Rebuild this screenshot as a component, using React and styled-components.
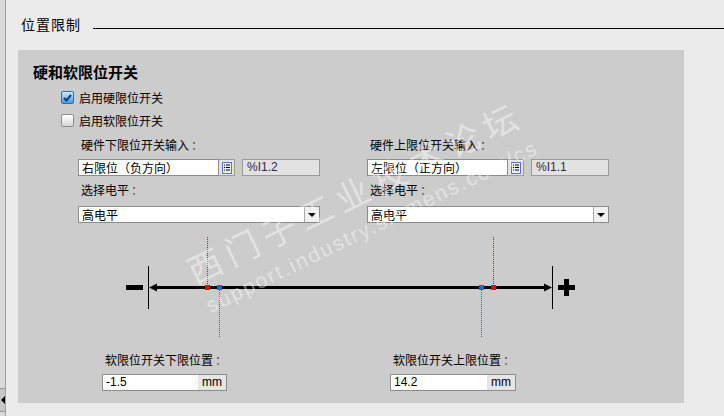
import React from "react";
import styled, { createGlobalStyle } from "styled-components";

const GlobalStyle = createGlobalStyle`
  html, body {
    margin: 0;
    padding: 0;
    background: #ebebeb;
  }
  body {
    font-family: "Liberation Sans", "Noto Sans CJK SC", sans-serif;
    font-size: 12px;
    color: #000;
  }
`;

const Root = styled.div`
  position: relative;
  display: flex;
  width: 724px;
  height: 416px;
  overflow: hidden;
  background: #ebebeb;
`;

const Strip = styled.div`
  width: 5px;
  flex: none;
  display: flex;
  flex-direction: column;
  justify-content: flex-end;
  background: #d9d9d9;
  border-right: 1px solid #a0a0a0;
  padding-bottom: 4px;
`;

const ScrollBtn = styled.div`
  height: 22px;
  background: #c6c6c6;
  border-top: 1px solid #9a9a9a;
  border-bottom: 1px solid #9a9a9a;
  display: flex;
  align-items: center;
  svg {
    display: block;
  }
`;

const Main = styled.div`
  flex: 1;
  padding-left: 12px;
`;

const Header = styled.div`
  display: flex;
  height: 16px;
  margin-top: 16px;
  margin-left: 3px;
`;

const Title = styled.div`
  font-family: "Noto Sans CJK SC", sans-serif;
  font-size: 14px;
  line-height: 16px;
  letter-spacing: 1px;
`;

const Rule = styled.div`
  flex: 1;
  align-self: flex-end;
  margin: 0 0 3px 12px;
  border-top: 1px solid #000;
`;

const Panel = styled.section`
  box-sizing: border-box;
  width: 666px;
  height: 353px;
  margin-top: 18px;
  padding: 12px 15px 0;
  background: #cccccc;
`;

const Heading = styled.h2`
  margin: 0;
  height: 20px;
  font-family: "Noto Sans CJK SC", sans-serif;
  font-size: 15px;
  font-weight: 700;
  line-height: 20px;
`;

const CheckRow = styled.label`
  display: flex;
  align-items: center;
  gap: 5px;
  height: ${(p) => p.$h}px;
  padding-left: 28px;
  margin-top: ${(p) => p.$mt || 0}px;
  font-family: "Noto Sans CJK SC", sans-serif;
`;

const Box = styled.span`
  box-sizing: border-box;
  width: 13px;
  height: 13px;
  border-radius: 2px;
  border: 1px solid ${(p) => (p.$on ? "#2f6fa7" : "#8e8e8e")};
  background: ${(p) =>
    p.$on
      ? "linear-gradient(#cfe8ff, #4a9be0)"
      : "linear-gradient(#ffffff, #d6d6d6)"};
  display: flex;
  align-items: center;
  justify-content: center;
`;

const Columns = styled.div`
  display: flex;
  gap: 47px;
  margin-left: 45px;
`;

const Column = styled.div`
  width: 242px;
`;

const Label = styled.div`
  height: 22px;
  line-height: 22px;
  padding-left: 3px;
  margin-top: ${(p) => p.$mt || 0}px;
  font-family: "Noto Sans CJK SC", sans-serif;
  white-space: nowrap;
`;

const Colon = styled.span`
  color: #5a4a30;
  margin-left: 2px;
`;

const FieldRow = styled.div`
  display: flex;
  height: 17px;
  margin-top: ${(p) => p.$mt || 0}px;
`;

const TextBox = styled.div`
  box-sizing: border-box;
  width: ${(p) => p.$w}px;
  height: 17px;
  border: 1px solid #8c8c8c;
  background: #fff;
  padding-left: 3px;
  line-height: 15px;
  font-family: "Noto Sans CJK SC", sans-serif;
  white-space: nowrap;
  overflow: hidden;
`;

const IconBtn = styled.div`
  box-sizing: border-box;
  width: 16px;
  height: 17px;
  border: 1px solid #9a9a9a;
  border-left: none;
  background: #e4e4e4;
  display: flex;
  align-items: center;
  justify-content: center;
`;

const Address = styled.div`
  box-sizing: border-box;
  width: 78px;
  height: 17px;
  margin-left: 7px;
  border: 1px solid #9a9a9a;
  background: #e2e2e2;
  padding-left: 4px;
  line-height: 15px;
  color: #2c2c44;
`;

const Select = styled.div`
  box-sizing: border-box;
  display: flex;
  width: 242px;
  height: 17px;
  margin-top: ${(p) => p.$mt || 0}px;
  border: 1px solid #8c8c8c;
  background: #fff;
`;

const SelectText = styled.div`
  flex: 1;
  padding-left: 3px;
  line-height: 15px;
  font-family: "Noto Sans CJK SC", sans-serif;
`;

const SelectArrow = styled.div`
  width: 14px;
  border-left: 1px solid #a8a8a8;
  background: #f0f0f0;
  display: flex;
  align-items: center;
  justify-content: center;
`;

const Diagram = styled.svg`
  display: block;
  margin: 7px 0 0 87px;
`;

const Limits = styled.div`
  display: flex;
  margin: 4px 0 0 69px;
`;

const Limit = styled.div`
  width: ${(p) => p.$w}px;
`;

const UnitBox = styled.div`
  box-sizing: border-box;
  display: flex;
  width: ${(p) => p.$w}px;
  height: 17px;
  margin-top: 3px;
  border: 1px solid #8c8c8c;
  background: #fff;
`;

const UnitValue = styled.div`
  flex: 1;
  padding-left: 3px;
  line-height: 15px;
`;

const Unit = styled.div`
  width: 28px;
  background: #e6e6e6;
  line-height: 15px;
  text-align: center;
`;

const Watermark = styled.div`
  position: absolute;
  left: 152px;
  top: 172px;
  width: 420px;
  transform: rotate(-26deg);
  pointer-events: none;
  color: rgba(255, 255, 255, 0.45);
  text-align: center;
`;

const MarkBig = styled.div`
  font-family: "Noto Sans CJK SC", sans-serif;
  font-size: 34px;
  line-height: 36px;
  letter-spacing: 7px;
  white-space: nowrap;
`;

const MarkSmall = styled.div`
  margin-top: 10px;
  font-family: "Liberation Sans", sans-serif;
  font-size: 21px;
  line-height: 22px;
  letter-spacing: 2px;
  white-space: nowrap;
`;

const Check = () => (
  <svg width="9" height="8" viewBox="0 0 9 8">
    <path d="M1 4 L3.5 6.5 L8 1" fill="none" stroke="#0d3d78" strokeWidth="2" />
  </svg>
);

const ListIcon = () => (
  <svg width="10" height="12" viewBox="0 0 10 12">
    <rect x="0.5" y="0.5" width="9" height="11" fill="#eef1ff" stroke="#5a6fd6" />
    <rect x="2" y="2.5" width="1" height="1" fill="#000" />
    <rect x="4" y="2.5" width="4" height="1" fill="#000" />
    <rect x="2" y="5" width="1" height="1" fill="#000" />
    <rect x="4" y="5" width="4" height="1" fill="#000" />
    <rect x="2" y="7.5" width="1" height="1" fill="#000" />
    <rect x="4" y="7.5" width="4" height="1" fill="#000" />
  </svg>
);

const DownArrow = () => (
  <svg width="8" height="4" viewBox="0 0 8 4">
    <path d="M0 0 H8 L4 4 Z" fill="#000" />
  </svg>
);

function Switch({ title, value, address }) {
  return (
    <Column>
      <Label $mt={3}>
        {title}
        <Colon>：</Colon>
      </Label>
      <FieldRow $mt={3}>
        <TextBox $w={141}>{value}</TextBox>
        <IconBtn>
          <ListIcon />
        </IconBtn>
        <Address>{address}</Address>
      </FieldRow>
      <Label $mt={3}>
        选择电平<Colon>：</Colon>
      </Label>
      <Select $mt={5}>
        <SelectText>高电平</SelectText>
        <SelectArrow>
          <DownArrow />
        </SelectArrow>
      </Select>
    </Column>
  );
}

function Travel() {
  const red = "#ff0000";
  const blue = "#0a70c0";
  return (
    <Diagram width="470" height="115" viewBox="0 0 470 115">
      <rect x="6" y="55" width="17" height="5" fill="#000" />
      <line x1="28.5" y1="36" x2="28.5" y2="79" stroke="#000" />
      <rect x="36" y="56" width="390" height="3" fill="#000" />
      <polygon points="29,57.5 37,53.5 37,61.5" fill="#000" />
      <polygon points="432,57.5 424,53.5 424,61.5" fill="#000" />
      <line x1="432.5" y1="36" x2="432.5" y2="79" stroke="#000" />
      <rect x="438" y="55" width="17" height="5" fill="#000" />
      <rect x="444" y="49" width="5" height="17" fill="#000" />

      <line x1="87.5" y1="7" x2="87.5" y2="55" stroke="#b02020" strokeDasharray="1 1" />
      <line x1="373.5" y1="7" x2="373.5" y2="55" stroke="#b02020" strokeDasharray="1 1" />
      <line x1="99.5" y1="60" x2="99.5" y2="108" stroke="#2a6ea6" strokeDasharray="1 1" />
      <line x1="361.5" y1="60" x2="361.5" y2="108" stroke="#2a6ea6" strokeDasharray="1 1" />

      <rect x="85" y="55" width="5" height="5" fill={red} />
      <rect x="97" y="55" width="5" height="5" fill={blue} />
      <rect x="359" y="55" width="5" height="5" fill={blue} />
      <rect x="371" y="55" width="5" height="5" fill={red} />
    </Diagram>
  );
}

export default function App() {
  return (
    <Root>
      <GlobalStyle />
      <Strip>
        <ScrollBtn>
          <svg width="5" height="8" viewBox="0 0 5 8">
            <path d="M1 4 L5 0 V8 Z" fill="#000" />
          </svg>
        </ScrollBtn>
      </Strip>
      <Main>
        <Header>
          <Title>位置限制</Title>
          <Rule />
        </Header>
        <Panel>
          <Heading>硬和软限位开关</Heading>
          <CheckRow $h={23} $mt={4}>
            <Box $on>
              <Check />
            </Box>
            启用硬限位开关
          </CheckRow>
          <CheckRow $h={22}>
            <Box />
            启用软限位开关
          </CheckRow>
          <Columns>
            <Switch title="硬件下限位开关输入" value="右限位（负方向）" address="%I1.2" />
            <Switch title="硬件上限位开关输入" value="左限位（正方向）" address="%I1.1" />
          </Columns>
          <Travel />
          <Limits>
            <Limit $w={288}>
              <Label>
                软限位开关下限位置<Colon>：</Colon>
              </Label>
              <UnitBox $w={125}>
                <UnitValue>-1.5</UnitValue>
                <Unit>mm</Unit>
              </UnitBox>
            </Limit>
            <Limit $w={126}>
              <Label>
                软限位开关上限位置<Colon>：</Colon>
              </Label>
              <UnitBox $w={126}>
                <UnitValue>14.2</UnitValue>
                <Unit>mm</Unit>
              </UnitBox>
            </Limit>
          </Limits>
        </Panel>
      </Main>
      <Watermark>
        <MarkBig>西门子工业技术论坛</MarkBig>
        <MarkSmall>support.industry.siemens.com/cs</MarkSmall>
      </Watermark>
    </Root>
  );
}
